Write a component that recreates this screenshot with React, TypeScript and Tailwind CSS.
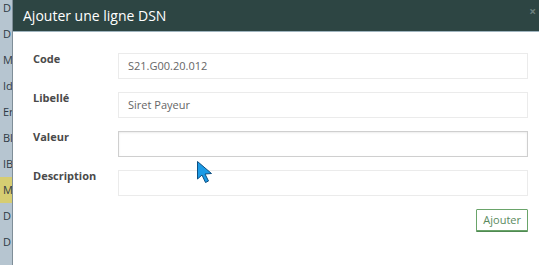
import * as React from 'react'

const BEHIND = ['D', 'D', 'M', 'Id', 'Er', 'Bl', 'IB', 'M', 'D', 'D']

const FIELDS = [
  { label: 'Code', value: 'S21.G00.20.012' },
  { label: 'Libellé', value: 'Siret Payeur' },
  { label: 'Valeur', value: '', focus: true },
  { label: 'Description', value: '' },
]

function Cursor() {
  return (
    <svg className="absolute left-[196px] top-[160px]" width="18" height="24" viewBox="0 0 18 24">
      <path
        d="M1.5 1.5 L1.5 19 L6 15 L9.5 22.5 L12.5 21 L9 14 L15.5 13.5 Z"
        fill="#1c9be6"
        stroke="#0d4f82"
        strokeWidth="1"
        strokeLinejoin="round"
      />
    </svg>
  )
}

export default function App() {
  return (
    <div className="relative flex h-[265px] w-[539px] overflow-hidden bg-white font-['Open_Sans',sans-serif]">
      {/* page behind the dialog, dimmed */}
      <div className="w-[12px] shrink-0 overflow-hidden bg-[#b6c5d0]">
        <div className="-mt-[5px] flex flex-col">
          {BEHIND.map((t, i) => (
            <div
              key={i}
              className={
                'flex h-[26px] items-center whitespace-nowrap pl-[3px] text-[11px] text-[#2f3a44] ' +
                (i === 7 ? 'bg-[#d6cd72]' : '')
              }
            >
              {t}
            </div>
          ))}
        </div>
      </div>

      <div className="flex min-w-0 flex-1 flex-col border-l border-[#7f8e98]">
        <div className="flex h-[32px] shrink-0 items-center justify-between border-b border-[#9fb4bf] bg-[#2d4543] pl-[10px] pr-[3px]">
          <span className="text-[14px] text-white">Ajouter une ligne DSN</span>
          <span className="-mt-[8px] text-[12px] font-bold leading-none text-[#6b7f7d]">×</span>
        </div>

        <div className="flex flex-col gap-[13px] pl-[20px] pr-[11px] pt-[21px]">
          {FIELDS.map((f) => (
            <div key={f.label} className="flex items-start">
              <div className="w-[85px] shrink-0 text-[11px] font-bold leading-[12px] text-[#4a4a4a]">{f.label}</div>
              <div
                className={
                  'flex h-[26px] flex-1 items-center bg-white px-[9px] text-[11px] text-[#666666] ' +
                  (f.focus
                    ? 'border border-[#cfcfcf] shadow-[inset_0_1px_2px_rgba(0,0,0,0.08)]'
                    : 'border border-[#ebebeb]')
                }
              >
                {f.value}
              </div>
            </div>
          ))}
          <div className="flex justify-end">
            <button className="h-[22px] rounded-[1px] border border-[#6aa46a] bg-white px-[6px] text-[11px] text-[#5a8a5e] shadow-[0_1px_0_#4f8a52]">
              Ajouter
            </button>
          </div>
        </div>
      </div>

      <Cursor />
    </div>
  )
}
